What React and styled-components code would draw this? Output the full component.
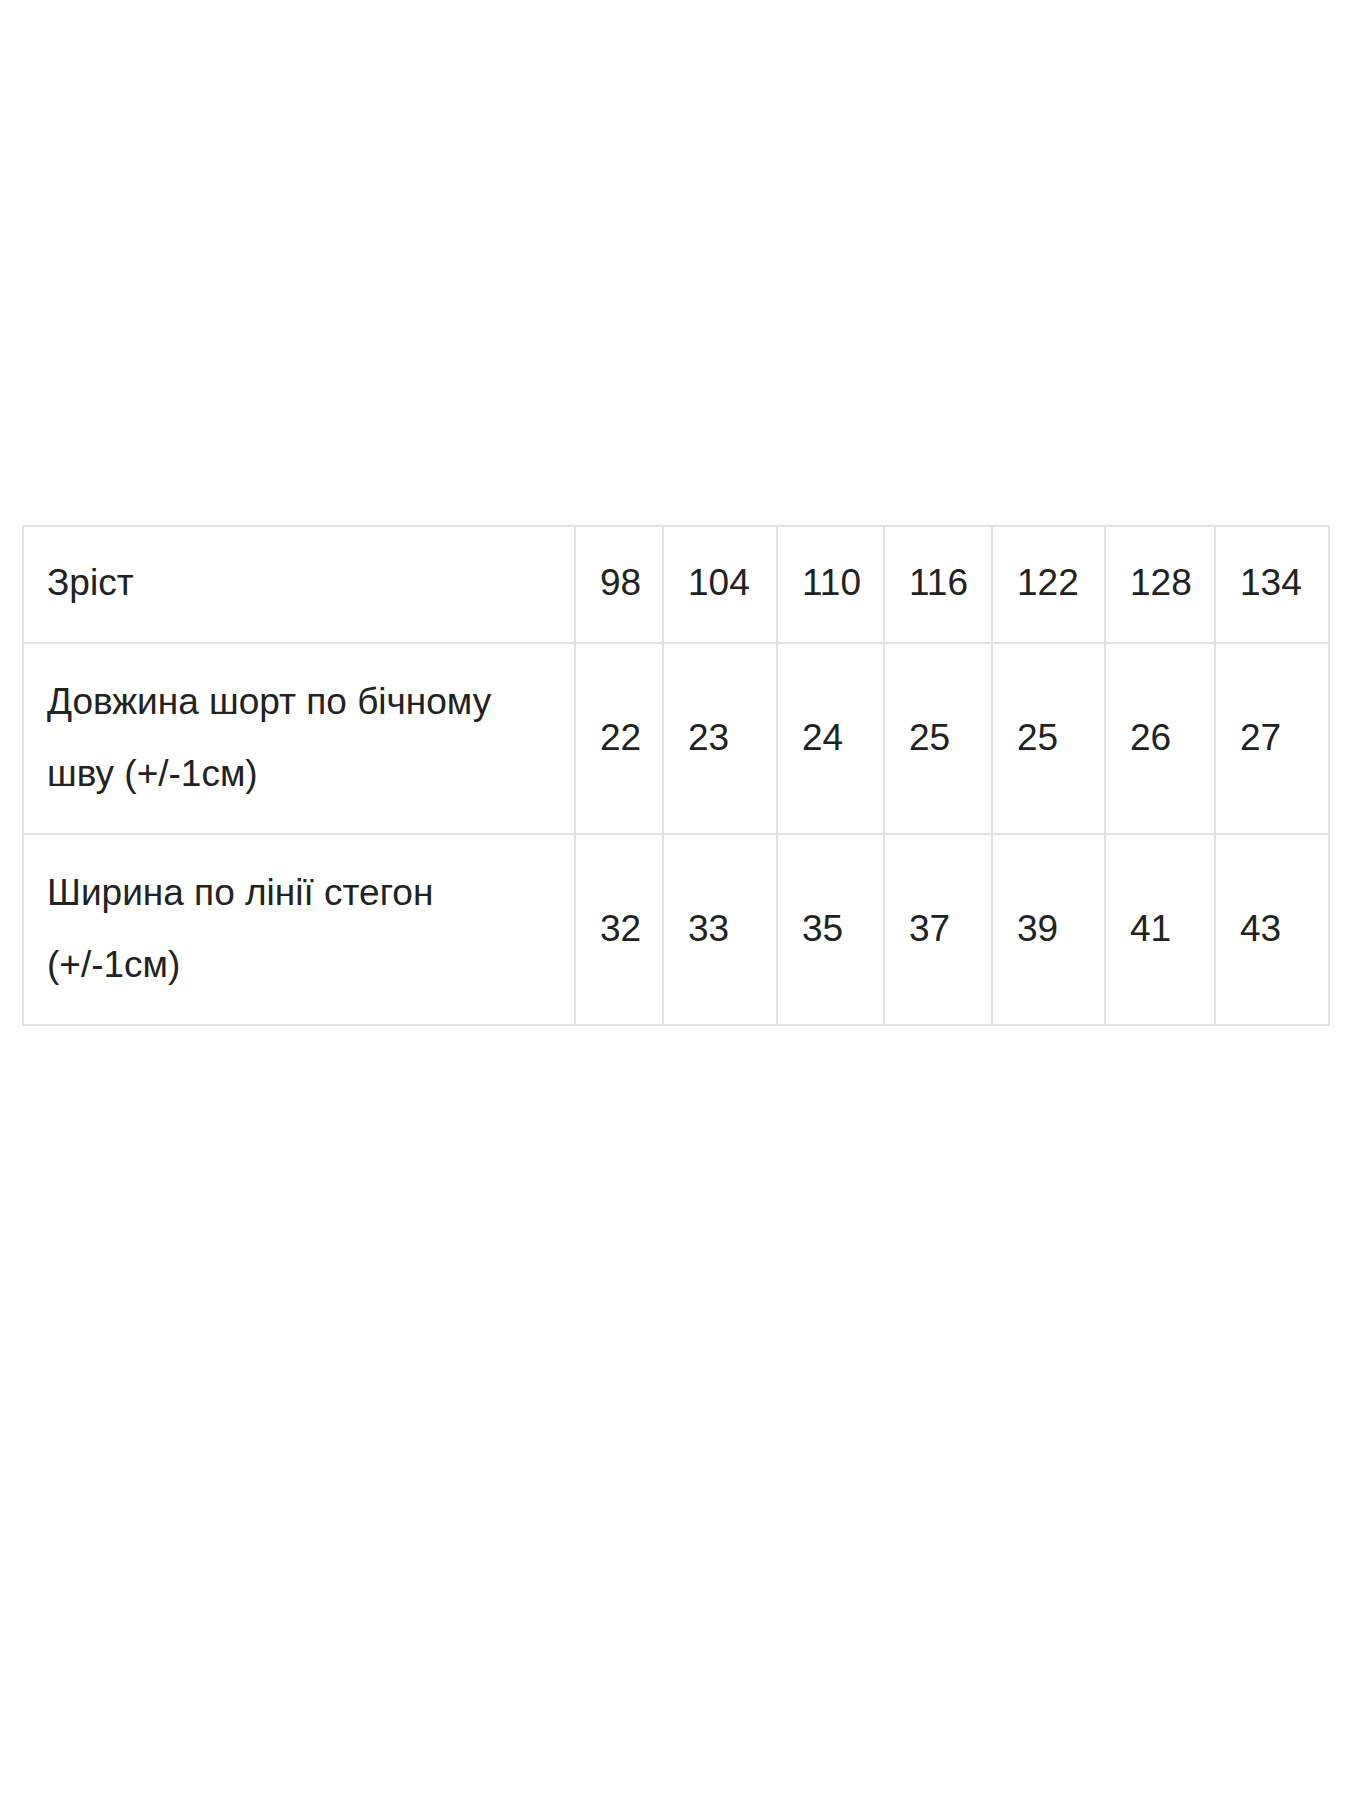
import styled, { createGlobalStyle } from 'styled-components';

const GlobalStyle = createGlobalStyle`
  html, body {
    margin: 0;
    padding: 0;
    background: #fff;
  }
  body {
    font-family: "Liberation Sans", Arial, sans-serif;
    color: #222;
  }
`;

const widths = [552, 88, 114, 107, 108, 113, 110, 114];

const rows = [
  { label: 'Зріст', values: ['98', '104', '110', '116', '122', '128', '134'], head: true },
  {
    label: 'Довжина шорт по бічному шву (+/-1см)',
    values: ['22', '23', '24', '25', '25', '26', '27'],
  },
  {
    label: 'Ширина по лінії стегон (+/-1см)',
    values: ['32', '33', '35', '37', '39', '41', '43'],
  },
];

const App = () => {
  return (
    <>
      <GlobalStyle />
      <Page>
        <SizeTable>
          <colgroup>
            {widths.map((w, i) => (
              <col key={i} style={{ width: w }} />
            ))}
          </colgroup>
          <tbody>
            {rows.map(row => (
              <Row key={row.label} head={row.head ? 1 : 0}>
                <LabelCell>{row.label}</LabelCell>
                {row.values.map((v, i) => (
                  <ValueCell key={i}>{v}</ValueCell>
                ))}
              </Row>
            ))}
          </tbody>
        </SizeTable>
      </Page>
    </>
  );
};

const Page = styled.div`
  padding: 525px 15px 0 22px;
  min-height: 1800px;
  box-sizing: border-box;
`;

const SizeTable = styled.table`
  width: 1306px;
  table-layout: fixed;
  border-collapse: collapse;
  border: 2px solid #e2e2e2;
`;

const Row = styled.tr`
  & > td {
    padding-top: ${p => (p.head ? '20px' : '22px')};
    padding-bottom: 23px;
  }
`;

const Cell = styled.td`
  border: 2px solid #e2e2e2;
  padding: 22px 24px;
  font-size: 37px;
  line-height: 72px;
  vertical-align: middle;
  color: #222;
`;

const LabelCell = styled(Cell)`
  padding-left: 23px;
  padding-right: 40px;
`;

const ValueCell = styled(Cell)`
  padding-left: 24px;
  padding-right: 6px;
`;

export default App;
